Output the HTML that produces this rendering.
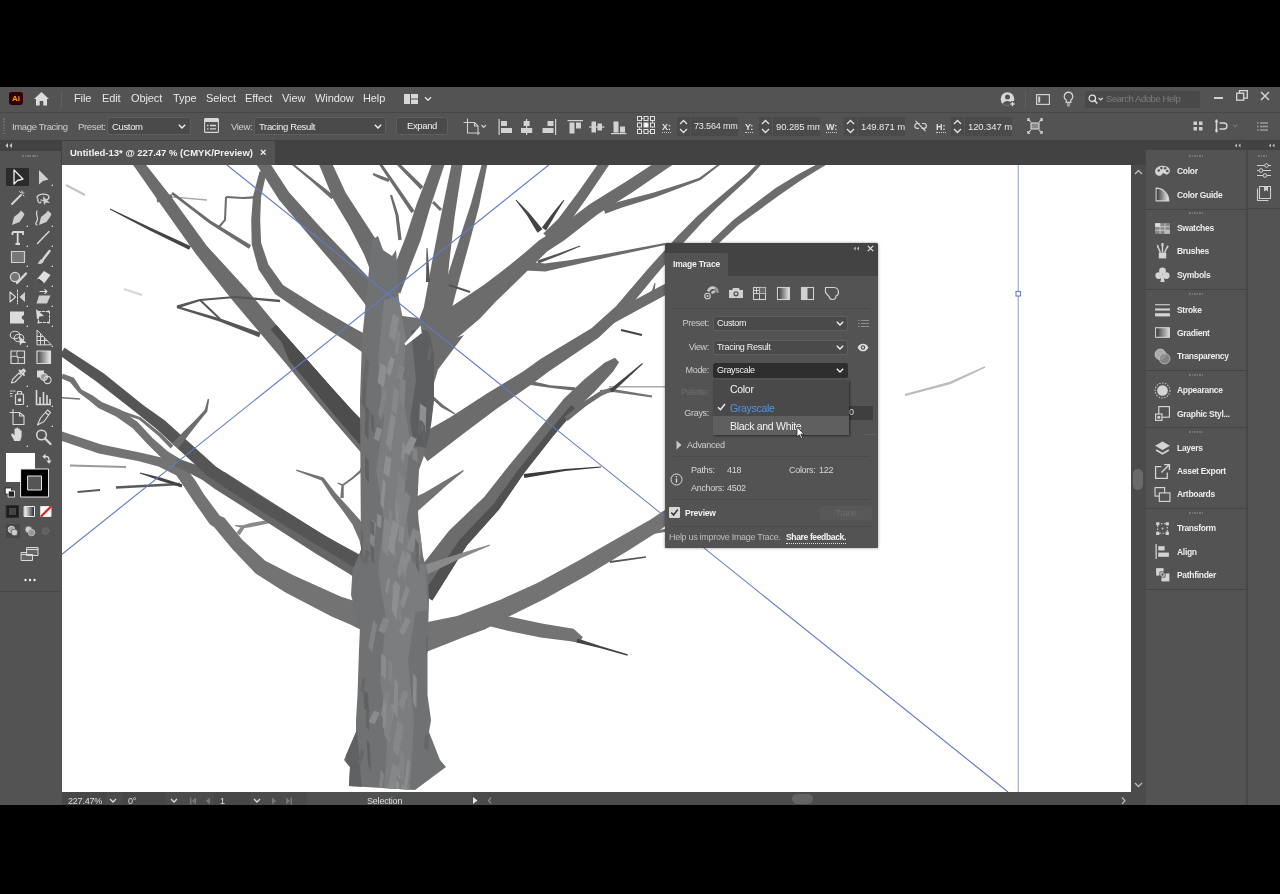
<!DOCTYPE html>
<html lang="en">
<head>
<meta charset="utf-8">
<title>Adobe Illustrator - Image Trace</title>
<style>
*{box-sizing:border-box;margin:0;padding:0}
html,body{width:1280px;height:894px;overflow:hidden;background:#000}
body{position:relative;font-family:"Liberation Sans",sans-serif;font-size:10.5px;color:#e2e2e2;letter-spacing:-0.2px}
.abs{position:absolute}
#app{will-change:transform;position:absolute;left:0;top:87px;width:1280px;height:718px;background:#535353;overflow:hidden}
/* coordinates inside #app are target-y minus 87 */
#menubar{position:absolute;left:0;top:0;width:1280px;height:25px;background:#535353}
#menubar .mi{position:absolute;top:5px;font-size:11px;color:#e6e6e6;letter-spacing:-0.1px;white-space:nowrap}
#ctrlbar{position:absolute;left:0;top:25px;width:1280px;height:29px;background:#535353;border-top:1px solid #474747;border-bottom:1px solid #404040}
#ctrlbar .t{position:absolute;top:8px;font-size:9.5px;color:#d0d0d0;white-space:nowrap;letter-spacing:-0.35px}
.dd{position:absolute;background:#4a4a4a;border:1px solid #5e5e5e;border-radius:2px;color:#f0f0f0;font-size:9.5px;white-space:nowrap;letter-spacing:-0.35px}
.dd span{position:absolute;left:4px;top:3px}
.chev{position:absolute;width:8px;height:5px}
#tabbar{position:absolute;left:0;top:54px;width:1280px;height:24px;background:#424242}
#tab{position:absolute;left:62px;top:0;width:213px;height:24px;background:#535353;font-weight:bold;font-size:9.5px;color:#f2f2f2;letter-spacing:0}
#tab span{position:absolute;top:6px;white-space:nowrap}
#tools{position:absolute;left:0;top:54px;width:61px;height:665px;background:#535353}
#canvas{position:absolute;left:62px;top:78px;width:1069px;height:627px;background:#fff;overflow:hidden}
#vscroll{position:absolute;left:1131px;top:78px;width:15px;height:627px;background:#4b4b4b}
#status{position:absolute;left:62px;top:705px;width:1084px;height:14px;background:#4b4b4b;font-size:9px;color:#ddd}
#status .t{position:absolute;top:3.500px;white-space:nowrap}
#rpanel{position:absolute;left:1146px;top:54px;width:134px;height:665px;background:#535353}
.pi{position:absolute;left:31px;margin-top:1px;font-size:8.500px;font-weight:bold;color:#ececec;white-space:nowrap;letter-spacing:-0.300px}
.grip{position:absolute;width:12px;height:2px;background:repeating-linear-gradient(90deg,#777 0 1.5px,transparent 1.5px 2.5px)}
.sep{position:absolute;height:1px;background:#454545}
</style>
</head>
<body>
<div id="app">
  <div id="menubar">
    <!-- Ai logo -->
    <div class="abs" style="left:9px;top:5px;width:14px;height:13px;background:#330000;border-radius:3px;color:#ff9a00;font-size:8px;font-weight:bold;text-align:center;line-height:13px;letter-spacing:0">Ai</div>
    <svg class="abs" style="left:33px;top:4px" width="17" height="16" viewBox="0 0 17 16"><path d="M8.5 1 L16 8 H14 V14.5 H10.3 V10 H6.7 V14.5 H3 V8 H1 Z" fill="#dcdcdc"/></svg>
    <div class="abs" style="left:61px;top:4px;width:1px;height:17px;background:#5f5f5f"></div>
    <div class="mi" style="left:74px">File</div>
    <div class="mi" style="left:102px">Edit</div>
    <div class="mi" style="left:131px">Object</div>
    <div class="mi" style="left:173px">Type</div>
    <div class="mi" style="left:206px">Select</div>
    <div class="mi" style="left:245px">Effect</div>
    <div class="mi" style="left:282px">View</div>
    <div class="mi" style="left:315px">Window</div>
    <div class="mi" style="left:363px">Help</div>

    <svg class="abs" style="left:404px;top:6px" width="30" height="12" viewBox="0 0 30 12"><rect x="0" y="1" width="6" height="10" fill="#d8d8d8"/><rect x="7" y="1" width="7" height="4.500" fill="#d8d8d8"/><rect x="7" y="6.500" width="7" height="4.500" fill="#d8d8d8"/><path d="M21 4.200L24 7.200 27 4.200" fill="none" stroke="#e0e0e0" stroke-width="1.400"/></svg>
    <svg class="abs" style="left:1000px;top:4px" width="16" height="17" viewBox="0 0 16 17"><circle cx="7.500" cy="8" r="6.800" fill="#d8d8d8"/><circle cx="7.500" cy="6" r="2.500" fill="#535353"/><path d="M3 12.500c1-3.500 8-3.500 9 0-2.500 3-6.500 3-9 0z" fill="#535353"/><path d="M12.500 10v6M9.500 13h6" stroke="#535353" stroke-width="3"/><path d="M12.500 10.800v4.400M10.300 13h4.400" stroke="#d8d8d8" stroke-width="1.300"/></svg>
    <div class="abs" style="left:1025px;top:4px;width:1px;height:17px;background:#5f5f5f"></div>
    <svg class="abs" style="left:1036px;top:7px" width="14" height="11" viewBox="0 0 14 11"><rect x="0.600" y="0.600" width="12.800" height="9.800" fill="none" stroke="#cfcfcf" stroke-width="1.200"/><rect x="2.200" y="2.500" width="2" height="6" fill="#cfcfcf"/></svg>
    <svg class="abs" style="left:1063px;top:4px" width="11" height="16" viewBox="0 0 11 16"><path d="M5.500 1.200a4.300 4.300 0 0 0-2.300 7.900v2.200h4.600V9.100A4.300 4.300 0 0 0 5.500 1.200z" fill="none" stroke="#d8d8d8" stroke-width="1.200"/><path d="M3.700 13h3.600M4.200 14.800h2.600" stroke="#d8d8d8" stroke-width="1.100"/></svg>
    <div class="abs" style="left:1085px;top:4px;width:115px;height:17px;background:#494949;border-radius:2px"></div>
    <svg class="abs" style="left:1088px;top:7px" width="16" height="11" viewBox="0 0 16 11"><circle cx="4.300" cy="4.300" r="3.200" fill="none" stroke="#e0e0e0" stroke-width="1.300"/><path d="M6.600 6.600L9.300 9.600" stroke="#e0e0e0" stroke-width="1.500"/><path d="M10.600 3.800L12.700 6 14.800 3.800" fill="none" stroke="#e0e0e0" stroke-width="1.200"/></svg>
    <div class="abs" style="left:1106px;top:6px;font-size:9.500px;color:#7d7d7d;letter-spacing:-0.450px;white-space:nowrap">Search Adobe Help</div>
    <div class="abs" style="left:1214px;top:10px;width:9px;height:2px;background:#d0d0d0"></div>
    <svg class="abs" style="left:1236px;top:3px" width="12" height="11" viewBox="0 0 12 11"><rect x="0.700" y="3.200" width="7" height="7" fill="none" stroke="#d8d8d8" stroke-width="1.300"/><path d="M3.500 3V0.700h7.800v7.500H8" fill="none" stroke="#d8d8d8" stroke-width="1.300"/></svg>
    <svg class="abs" style="left:1260px;top:4px" width="10" height="10" viewBox="0 0 10 10"><path d="M1 1L9 9M9 1L1 9" stroke="#d8d8d8" stroke-width="1.400"/></svg>
  </div>
  <div id="ctrlbar">
    <div class="abs" style="left:3px;top:5px;width:2px;height:16px;background:repeating-linear-gradient(180deg,#6a6a6a 0 1.500px,transparent 1.500px 3px)"></div>
    <div class="t" style="left:12px">Image Tracing</div>
    <div class="t" style="left:78px">Preset:</div>
    <div class="dd" style="left:107px;top:4px;width:84px;height:18px"><span>Custom</span><svg class="chev" style="left:70px;top:6px" viewBox="0 0 8 5"><path d="M0.800 0.800L4 4 7.200 0.800" fill="none" stroke="#f0f0f0" stroke-width="1.400"/></svg></div>
    <svg class="abs" style="left:204px;top:5px" width="15" height="15" viewBox="0 0 15 15"><rect x="0.600" y="0.600" width="13.800" height="13.800" rx="1" fill="none" stroke="#d8d8d8" stroke-width="1.100"/><rect x="0.600" y="0.600" width="13.800" height="3.400" fill="#d8d8d8"/><path d="M3 7.500h1.500M6 7.500h6M3 10.800h1.500M6 10.800h6" stroke="#d8d8d8" stroke-width="1.300"/></svg>
    <div class="t" style="left:231px">View:</div>
    <div class="dd" style="left:254px;top:4px;width:132px;height:18px"><span>Tracing Result</span><svg class="chev" style="left:119px;top:6px" viewBox="0 0 8 5"><path d="M0.800 0.800L4 4 7.200 0.800" fill="none" stroke="#f0f0f0" stroke-width="1.400"/></svg></div>
    <div class="dd" style="left:396px;top:4px;width:52px;height:18px;text-align:center;line-height:16px">Expand</div>

    <svg class="abs" style="left:463px;top:5px" width="24" height="18" viewBox="0 0 24 18" fill="none" stroke="#cfcfcf" stroke-width="1.100"><path d="M4.500 0.500v14.500h12.500M0.500 4.500h11l3.500 3.500v9"/><path d="M11.500 4.500v3.500h3.500"/><path d="M18.500 7l2.200 2.300L22.900 7" stroke-width="1.200"/></svg>
    <svg class="abs" style="left:498px;top:6px" width="130" height="16" viewBox="0 0 130 16" fill="#d2d2d2">
      <rect x="0.500" y="0" width="1.200" height="16"/><rect x="3" y="2" width="6" height="5"/><rect x="3" y="9" width="11" height="5"/>
      <rect x="28" y="0" width="1.200" height="16"/><rect x="25.600" y="2" width="6" height="5"/><rect x="23" y="9" width="11.200" height="5"/>
      <rect x="57" y="0" width="1.200" height="16"/><rect x="49.500" y="2" width="6" height="5"/><rect x="44.500" y="9" width="11" height="5"/>
      <rect x="69.500" y="1" width="15.500" height="1.200"/><rect x="71.500" y="3.500" width="5" height="11"/><rect x="78" y="3.500" width="5" height="6"/>
      <rect x="91" y="7.400" width="15.500" height="1.200"/><rect x="93.500" y="2.500" width="4.500" height="11"/><rect x="99.500" y="4.500" width="4.500" height="7"/>
      <rect x="113" y="14" width="15.500" height="1.200"/><rect x="115.500" y="2.500" width="5" height="11"/><rect x="122" y="7.500" width="5" height="6"/>
    </svg>
    <svg class="abs" style="left:637px;top:3px" width="18" height="18" viewBox="0 0 18 18" fill="none" stroke="#e0e0e0" stroke-width="1"><rect x="2.500" y="2.500" width="13" height="13" stroke-dasharray="1.300 1.300"/><g fill="#535353"><rect x="0.500" y="0.500" width="4" height="4"/><rect x="7" y="0.500" width="4" height="4"/><rect x="13.500" y="0.500" width="4" height="4"/><rect x="0.500" y="7" width="4" height="4"/><rect x="13.500" y="7" width="4" height="4"/><rect x="0.500" y="13.500" width="4" height="4"/><rect x="7" y="13.500" width="4" height="4"/><rect x="13.500" y="13.500" width="4" height="4"/></g><rect x="7" y="7" width="4" height="4" fill="#fff"/></svg>
<div class="t" style="left:662px;top:8.500px;font-weight:bold;color:#e0e0e0;border-bottom:1px dotted #ccc;line-height:10px;font-size:9px;letter-spacing:0">X:</div><div class="abs" style="left:677px;top:4px;width:13px;height:19px;background:#4a4a4a"></div><svg class="abs" style="left:679px;top:6px" width="9" height="15" viewBox="0 0 9 15"><path d="M1 5L4.500 1.500 8 5M1 10L4.500 13.500 8 10" fill="none" stroke="#e4e4e4" stroke-width="1.300"/></svg><div class="abs" style="left:691px;top:4px;width:47px;height:19px;background:#4a4a4a;overflow:hidden;font-size:9px;color:#e8e8e8;white-space:nowrap;letter-spacing:-0.150px"><span style="position:absolute;left:3px;top:3.500px">73.564 mm</span></div><div class="t" style="left:745px;top:8.500px;font-weight:bold;color:#e0e0e0;border-bottom:1px dotted #ccc;line-height:10px;font-size:9px;letter-spacing:0">Y:</div><div class="abs" style="left:759px;top:4px;width:13px;height:19px;background:#4a4a4a"></div><svg class="abs" style="left:761px;top:6px" width="9" height="15" viewBox="0 0 9 15"><path d="M1 5L4.500 1.500 8 5M1 10L4.500 13.500 8 10" fill="none" stroke="#e4e4e4" stroke-width="1.300"/></svg><div class="abs" style="left:773px;top:4px;width:47px;height:19px;background:#4a4a4a;overflow:hidden;font-size:9.500px;color:#e8e8e8;white-space:nowrap;letter-spacing:-0.100px"><span style="position:absolute;left:3px;top:3.500px">90.285 mm</span></div><div class="t" style="left:826px;top:8.500px;font-weight:bold;color:#e0e0e0;border-bottom:1px dotted #ccc;line-height:10px;font-size:9px;letter-spacing:0">W:</div><div class="abs" style="left:844px;top:4px;width:13px;height:19px;background:#4a4a4a"></div><svg class="abs" style="left:846px;top:6px" width="9" height="15" viewBox="0 0 9 15"><path d="M1 5L4.500 1.500 8 5M1 10L4.500 13.500 8 10" fill="none" stroke="#e4e4e4" stroke-width="1.300"/></svg><div class="abs" style="left:858px;top:4px;width:47px;height:19px;background:#4a4a4a;overflow:hidden;font-size:9.500px;color:#e8e8e8;white-space:nowrap;letter-spacing:-0.100px"><span style="position:absolute;left:3px;top:3.500px">149.871 mm</span></div><svg class="abs" style="left:914px;top:7px" width="13" height="12" viewBox="0 0 13 12" fill="none" stroke="#d8d8d8" stroke-width="1.200"><path d="M5.500 3.500H3.200a2.400 2.400 0 0 0 0 4.800H5M8 3.500h2a2.400 2.400 0 0 1 0 4.800H7.500"/><path d="M1.500 0.800L11.500 11" stroke-width="1.100"/></svg><div class="t" style="left:936px;top:8.500px;font-weight:bold;color:#e0e0e0;border-bottom:1px dotted #ccc;line-height:10px;font-size:9px;letter-spacing:0">H:</div><div class="abs" style="left:951px;top:4px;width:13px;height:19px;background:#4a4a4a"></div><svg class="abs" style="left:953px;top:6px" width="9" height="15" viewBox="0 0 9 15"><path d="M1 5L4.500 1.500 8 5M1 10L4.500 13.500 8 10" fill="none" stroke="#e4e4e4" stroke-width="1.300"/></svg><div class="abs" style="left:965px;top:4px;width:47px;height:19px;background:#4a4a4a;overflow:hidden;font-size:9.500px;color:#e8e8e8;white-space:nowrap;letter-spacing:-0.100px"><span style="position:absolute;left:3px;top:3.500px">120.347 mm</span></div>
    <svg class="abs" style="left:1027px;top:5px" width="16" height="16" viewBox="0 0 16 16" fill="none" stroke="#d8d8d8" stroke-width="1.100"><rect x="4" y="5" width="8" height="6" fill="#888"/><path d="M0.800 0.800l3 3M15.200 0.800l-3 3M0.800 15.200l3-3M15.200 15.200l-3-3M0.800 3V0.800H3M13 0.800h2.200V3M0.800 13v2.200H3M13 15.200h2.200V13"/></svg>
    <svg class="abs" style="left:1193px;top:8px" width="10" height="10" viewBox="0 0 10 10" fill="#cfcfcf"><rect x="0.500" y="0.500" width="3.500" height="3.500"/><rect x="6" y="0.500" width="3.500" height="3.500"/><rect x="0.500" y="6" width="3.500" height="3.500"/><rect x="6" y="6" width="3.500" height="3.500"/></svg>
    <svg class="abs" style="left:1215px;top:6px" width="26" height="14" viewBox="0 0 26 14" fill="none" stroke="#d8d8d8" stroke-width="1.300"><path d="M1.500 0.500v13" stroke-width="1.500"/><circle cx="1.500" cy="2.500" r="1.300" fill="#d8d8d8" stroke="none"/><circle cx="1.500" cy="11.500" r="1.300" fill="#d8d8d8" stroke="none"/><path d="M4.500 4h4.500a3 3 0 0 1 0 6H4.500"/><path d="M18 5.500l2.200 2.300 2.200-2.300" stroke="#777" stroke-width="1.100"/></svg>
    <svg class="abs" style="left:1257px;top:9px" width="11" height="9" viewBox="0 0 11 9"><path d="M3 1h8M3 4.500h8M3 8h8" stroke="#9a9a9a" stroke-width="1.400"/><path d="M0 1h1.600M0 4.500h1.600M0 8h1.600" stroke="#9a9a9a" stroke-width="1.400"/></svg>
  </div>
  <div id="tabbar">
    <div id="tab"><span style="left:8px">Untitled-13* @ 227.47 % (CMYK/Preview)</span><span style="left:198px;top:5px;font-size:11px">×</span></div>
  </div>
  <div id="tools">
    <div class="abs" style="left:0;top:0;width:61px;height:10px;background:#424242"></div>
    <svg class="abs" style="left:5px;top:2px" width="8" height="5" viewBox="0 0 8 5"><path d="M3 0 L0.5 2.5 L3 5Z M7 0 L4.5 2.5 L7 5Z" fill="#cfcfcf"/></svg>
    <div class="grip" style="left:22px;top:14px;width:16px"></div>
    <div class="abs" style="left:6px;top:27px;width:23px;height:18px;background:#2b2b2b;border-radius:1px"></div>
    <svg class="abs" style="left:0;top:0" width="61" height="560" viewBox="0 141 61 560" fill="none" stroke="#d9d9d9" stroke-width="1.4" stroke-linejoin="round" stroke-linecap="round">
      <!-- row1: selection / direct selection -->
      <path d="M14 170 L14 184 L17.5 180.5 L23 179 Z" stroke="#f0f0f0" stroke-width="1.3"/>
      <path d="M39 170 L39 184.5 L43 181 L48.5 179.5 Z" fill="#cfcfcf" stroke="none"/>
      <path d="M53 184 l-2 2 h2z" fill="#cfcfcf" stroke="none"/>
      <!-- row2: magic wand / lasso -->
      <path d="M12 204 L21 195" stroke-width="1.8"/><path d="M22 191v2M24 193h-2M19.5 191.5l1 1M24 196l-1-1" stroke-width="1"/>
      <path d="M37 198 c0-5 12-5 12-1 c0 3-5 4-8 3 M38 199 c-1 3 2 5 3 3" stroke-width="1.3"/><path d="M43 196 L44 205 L46 202.5 L50 203 Z" fill="#cfcfcf" stroke="none"/>
      <!-- row3: pen / curvature -->
      <path d="M12 225 L14 217 L19 213 L23 217 L19.5 222 Z M19 213 L21 210.5 L24.5 214 L23 217" fill="#cfcfcf" stroke="none"/><path d="M28 225 l-2 2 h2z" fill="#cfcfcf" stroke="none"/>
      <path d="M39 225 L41 217 L46 213 L50 217 L46.5 222 Z M46 213 L48 210.5 L51.5 214 L50 217" fill="#cfcfcf" stroke="none"/><path d="M37 211 c-2 4 2 6 0 10 c-1 2 -2 3 0 4" stroke-width="1.2"/><path d="M53 225 l-2 2 h2z" fill="#cfcfcf" stroke="none"/>
      <!-- row4: type / line -->
      <path d="M12.5 232 H23 V235 M12.5 232 V235 M17.7 232 V244 M15.5 244 H20" stroke-width="1.8" stroke-linecap="butt" stroke-linejoin="miter"/><path d="M28 245 l-2 2 h2z" fill="#cfcfcf" stroke="none"/>
      <path d="M37.5 243.5 L49 231.5" stroke-width="1.4"/><path d="M53 245 l-2 2 h2z" fill="#cfcfcf" stroke="none"/>
      <!-- row5: rectangle / paintbrush -->
      <rect x="11.5" y="251.5" width="13" height="11" fill="#777" stroke="#cfcfcf" stroke-width="1.2"/><path d="M28 265 l-2 2 h2z" fill="#cfcfcf" stroke="none"/>
      <path d="M49.5 251 L43 259.5" stroke-width="2.4"/><path d="M42.5 259 c-3 0 -3 3 -5 4.500 c3 1 6 0 6.500 -3z" fill="#cfcfcf" stroke="none"/><path d="M53 265 l-2 2 h2z" fill="#cfcfcf" stroke="none"/>
      <!-- row6: shaper / eraser -->
      <circle cx="15" cy="277" r="4.600" fill="#777" stroke-width="1.2"/><path d="M17 283 L26 273.500" stroke-width="2.4"/><path d="M28 285 l-2 2 h2z" fill="#cfcfcf" stroke="none"/>
      <path d="M37 279 L44 271 L50.500 275 L44 283.500 Z" fill="#e0e0e0" stroke="none"/><path d="M38.500 279.500 L42.700 282.600" stroke="#444" stroke-width="1.6"/><path d="M53 285 l-2 2 h2z" fill="#cfcfcf" stroke="none"/>
      <!-- row7: reflect / scale(shear) -->
      <path d="M10 292 L15.500 297 L10 302 Z" stroke-width="1.1"/><path d="M25 292 L19.500 297 L25 302 Z" fill="#cfcfcf" stroke="none"/><path d="M17.500 290 V304" stroke-width="1" stroke-dasharray="2 1.300"/><path d="M28 305 l-2 2 h2z" fill="#cfcfcf" stroke="none"/>
      <path d="M36.500 303.500 L39 295.500 H50.500 L47 303.500 Z" fill="#cfcfcf" stroke="none"/><path d="M40 291.500 h7 m-2.200 -2 l2.200 2 l-2.200 2" stroke-width="1.100"/><path d="M53 305 l-2 2 h2z" fill="#cfcfcf" stroke="none"/>
      <!-- row8: width / free transform -->
      <path d="M10 311.500 H24 V315 C21 316 21 319 24 320 V323.500 H10 Z" fill="#dcdcdc" stroke="none"/><path d="M28 325 l-2 2 h2z" fill="#cfcfcf" stroke="none"/>
      <rect x="38.500" y="311.500" width="11" height="11" stroke-width="1" stroke-dasharray="2.200 1.500"/><path d="M36 309 L37 319.500 L39.500 316.500 L44 316 Z" fill="#dcdcdc" stroke="none"/><path d="M47.500 310.500h2v2h-2zM47.500 321.500h2v2h-2zM37.500 321.500h2v2h-2z" fill="#dcdcdc" stroke="none"/><path d="M53 325 l-2 2 h2z" fill="#cfcfcf" stroke="none"/>
      <!-- row9: shape builder / perspective grid -->
      <ellipse cx="15" cy="335" rx="4.800" ry="3.800" stroke-width="1.100"/><ellipse cx="19" cy="338" rx="4.800" ry="3.800" stroke-width="1.100"/><path d="M19 336 L20 345.500 L22 343 L26.500 343 Z" fill="#dcdcdc" stroke="none"/><path d="M28 345 l-2 2 h2z" fill="#cfcfcf" stroke="none"/>
      <path d="M37 344.500 V330 L51 344.500 Z M40.500 344.500 V334 M44.500 344.500 V338 M37 340.500 H47 M37 336.500 H43" stroke-width="1"/><path d="M53 345 l-2 2 h2z" fill="#cfcfcf" stroke="none"/>
      <!-- row10: mesh / gradient -->
      <rect x="11" y="351" width="13.500" height="12.500" stroke-width="1.200"/><path d="M11 357 c4 -3 9 3 13.500 0 M17.500 351 c-3 4 3 8 0 12.500" stroke-width="1"/>
      <defs><linearGradient id="tg" x1="0" x2="1"><stop offset="0" stop-color="#444"/><stop offset="1" stop-color="#eee"/></linearGradient>
      <linearGradient id="tg2" x1="0" x2="1"><stop offset="0" stop-color="#fff"/><stop offset="1" stop-color="#222"/></linearGradient></defs>
      <rect x="37" y="351" width="13.500" height="12.500" fill="url(#tg)" stroke-width="1.200"/>
      <!-- row11: eyedropper / blend -->
      <path d="M11.500 383 L12.500 379.500 L19 373 L21.500 375.500 L15 382 Z" stroke-width="1.100"/><path d="M19.500 370.500 L24 375 M20.500 372.500 L23.500 369.500 L25 371 L22.500 374" stroke-width="1.800"/><path d="M28 385 l-2 2 h2z" fill="#cfcfcf" stroke="none"/>
      <rect x="37" y="370.500" width="7" height="7" fill="#dcdcdc" stroke="none"/><circle cx="44" cy="377" r="3.600" fill="#999" stroke-width="1"/><circle cx="47.500" cy="380" r="3.600" stroke-width="1.100"/>
      <!-- row12: symbol sprayer / column graph -->
      <rect x="15.500" y="394" width="8" height="10.500" rx="1" stroke-width="1.200"/><circle cx="19.500" cy="400" r="1.800" fill="#dcdcdc" stroke="none"/><path d="M17.500 394 v-2.500 h4 v2.500" stroke-width="1.100"/><path d="M10.500 391h1.500M13.500 391h1.500M10.500 393.500h1.500M10.500 396h1.500" stroke-width="1.200"/><path d="M28 405 l-2 2 h2z" fill="#cfcfcf" stroke="none"/>
      <path d="M36.500 390 V404.500 H51 M40 404 V397 M43.500 404 V392 M47 404 V395 M50 404 V399" stroke-width="1.600" stroke-linecap="butt"/><path d="M53 405 l-2 2 h2z" fill="#cfcfcf" stroke="none"/>
      <!-- row13: artboard / slice -->
      <path d="M13 409.500 V424.500 H24 V416 L19.500 412.500 H10 M19.500 412.500 V416 H24" stroke-width="1.100"/>
      <path d="M37.500 425 L40.500 418 L47.500 410 L50.500 412.500 L44 421.500 Z M45.500 412.500 l3 2.500" stroke-width="1.100"/><path d="M53 425 l-2 2 h2z" fill="#cfcfcf" stroke="none"/>
      <!-- row14: hand / zoom -->
      <path d="M13.500 439 c-2 -3 -3 -5 -1.500 -5.500 c1 -0.300 2 1.500 2.500 2 v-6 c0 -1.300 1.800 -1.300 1.800 0 v-1 c0 -1.300 1.800 -1.300 1.800 0 v1 c0 -1.300 1.800 -1.300 1.800 0 v1.500 c0 -1.200 1.700 -1.200 1.700 0 v5 c0 2 -1 3 -1.500 5 h-6 z" fill="#dcdcdc" stroke="none"/><path d="M28 445 l-2 2 h2z" fill="#cfcfcf" stroke="none"/>
      <circle cx="41.500" cy="435" r="4.800" stroke-width="1.500"/><path d="M45 438.500 L50.500 444" stroke-width="2.200"/>
      <!-- fill / stroke -->
      <rect x="6" y="453" width="29" height="29" fill="#fff" stroke="none"/>
      <path d="M44.500 456.500 h1.500 a3 3 0 0 1 3 3 v1.500" stroke-width="1.300"/><path d="M45.500 453.800 L42.300 456.500 L45.500 459.200Z M46.300 460.500 L49 463.700 L51.700 460.500Z" fill="#dcdcdc" stroke="none"/>
      <rect x="21" y="469" width="27.500" height="28" fill="#000" stroke="#e8e8e8" stroke-width="1"/>
      <rect x="28" y="476" width="13.500" height="14" fill="#555" stroke="#e8e8e8" stroke-width="1"/>
      <rect x="5.500" y="488" width="6" height="6" fill="#fff" stroke="#222" stroke-width="0.800"/><rect x="8.500" y="491" width="6" height="6" fill="#222" stroke="#fff" stroke-width="0.800"/>
      <!-- color / gradient / none -->
      <rect x="6.500" y="505.500" width="12" height="12" fill="#1c1c1c" stroke="#2d2d2d" stroke-width="1"/><rect x="9" y="508" width="7" height="7" fill="#444" stroke="none"/>
      <rect x="24.500" y="506.500" width="10" height="10" fill="url(#tg2)" stroke="#e8e8e8" stroke-width="1"/>
      <rect x="41" y="506.500" width="10" height="10" fill="#fff" stroke="#e8e8e8" stroke-width="1"/><path d="M41.500 516 L50.500 507" stroke="#e02020" stroke-width="2.200"/>
      <!-- draw modes -->
      <rect x="6" y="524" width="14" height="14" fill="#474747" stroke="none"/>
      <circle cx="11.500" cy="529.500" r="3.300" fill="#aaa" stroke-width="0.900"/><circle cx="14.500" cy="532.500" r="3.300" fill="#cfcfcf" stroke="#555" stroke-width="0.800"/>
      <circle cx="28.500" cy="529.500" r="3.300" fill="#cfcfcf" stroke="#777" stroke-width="0.800"/><circle cx="31.500" cy="532.500" r="3.300" fill="#999" stroke="#bbb" stroke-width="0.900"/>
      <circle cx="45.500" cy="531" r="3.400" fill="#606060" stroke="#6a6a6a" stroke-width="0.900"/>
      <!-- screen mode -->
      <rect x="21.500" y="552.500" width="11" height="8" fill="#666" stroke-width="1"/><rect x="27" y="547.500" width="11" height="8" fill="#666" stroke-width="1"/><path d="M21.500 554.500h11M27 549.500h11" stroke-width="1"/>
      <!-- dots -->
      <circle cx="25.500" cy="580" r="1.200" fill="#eee" stroke="none"/><circle cx="30" cy="580" r="1.200" fill="#eee" stroke="none"/><circle cx="34.500" cy="580" r="1.200" fill="#eee" stroke="none"/>
    </svg>
    <div class="sep" style="left:0;top:450px;width:61px;background:#484848"></div>
  </div>
  <div id="canvas">
    <svg id="art" width="1069" height="627" viewBox="62 165 1069 627" style="position:absolute;left:0;top:0">
<path d="M66.0 185.0 L85.0 195.0" stroke="#c4c4c4" stroke-width="2.0" fill="none"/>
<path d="M124.0 289.0 L142.0 295.0" stroke="#d6d6d6" stroke-width="2.0" fill="none"/>
<path d="M70.0 465.5 L126.0 467.0" stroke="#9a9a9a" stroke-width="2.0" fill="none"/>
<path d="M77.5 492.0 L100.0 490.0" stroke="#5a5a5a" stroke-width="2.0" fill="none"/>
<path d="M116.0 487.5 L180.0 484.0" stroke="#5a5a5a" stroke-width="2.5" fill="none"/>
<path d="M139.9 473.5 L159.6 480.4 L181.5 487.4 L182.5 484.6 L160.4 477.6 L140.1 472.5Z" fill="#444444"/>
<path d="M905.3 396.0 L950.4 384.2 L985.3 367.7 L984.7 366.3 L949.6 381.8 L904.7 394.0Z" fill="#bdbdbd"/>
<path d="M61.1 378.3 L70.1 382.3 L78.6 392.5 L89.3 400.5 L98.3 408.1 L116.0 416.5 L132.4 428.0 L147.2 443.8 L162.1 458.5 L174.9 468.5 L181.1 459.5 L167.9 451.5 L152.8 438.2 L137.6 422.0 L120.0 409.5 L101.7 401.9 L92.7 395.5 L81.4 389.5 L73.9 377.7 L62.9 373.7Z" fill="#737373"/>
<path d="M117.5 412.4 L139.3 419.8 L158.8 436.3 L170.6 448.4 L173.4 445.6 L161.2 433.7 L140.7 417.2 L118.5 409.6Z" fill="#737373"/>
<path d="M62.0 397.7 L80.0 399.0" stroke="#737373" stroke-width="1.6" fill="none"/>
<path d="M58.6 439.8 L98.8 453.6 L139.1 461.2 L158.5 466.5 L176.2 475.2 L184.6 487.6 L194.0 501.8 L209.8 524.2 L214.0 527.1 L232.5 549.3 L255.6 573.5 L285.1 592.3 L332.1 616.7 L350.3 624.6 L367.1 633.1 L376.9 606.9 L358.7 602.2 L341.1 596.7 L293.9 575.5 L265.2 560.7 L242.5 540.1 L224.4 517.7 L219.8 515.8 L204.2 494.8 L195.4 480.4 L183.8 464.8 L161.5 457.5 L140.9 452.8 L101.2 444.4 L61.4 431.2Z" fill="#737373"/>
<path d="M234.9 526.0 L243.0 528.3 L250.4 527.2 L268.3 523.5 L287.2 520.2 L286.8 517.8 L267.7 520.1 L249.6 523.2 L243.0 525.3 L235.1 525.0Z" fill="#8a8a8a"/>
<path d="M241.6 526.0 L236.4 532.8 L239.6 535.2 L244.4 528.0Z" fill="#8a8a8a"/>
<path d="M174.4 465.7 L188.1 472.6 L202.5 480.0 L215.0 489.1 L264.8 520.7 L314.8 552.9 L349.0 573.7 L363.8 583.9 L376.2 562.1 L360.0 554.7 L325.2 535.9 L275.2 504.3 L225.0 472.3 L207.5 468.0 L191.9 463.4 L177.6 458.3Z" fill="#666666"/>
<path d="M59.5 355.1 L97.0 382.0 L137.3 413.6 L157.1 429.6 L179.8 450.6 L208.2 476.5 L253.4 506.3 L313.5 543.0 L352.7 566.6 L366.5 575.1 L373.5 562.9 L359.3 555.4 L319.9 532.4 L260.0 495.7 L215.8 466.5 L188.2 441.4 L164.9 420.4 L143.7 405.4 L103.6 373.2 L64.5 347.7Z" fill="#555555"/>
<path d="M178.2 448.6 L188.2 435.6 L198.1 422.8 L207.3 411.4 L209.2 399.2 L207.8 398.8 L204.7 410.0 L195.1 420.2 L183.6 431.6 L172.2 443.4Z" fill="#6c6c6c"/>
<path d="M296.0 470.8 L321.5 480.5 L331.7 496.2 L342.4 510.3 L352.5 524.4 L359.5 540.4 L362.3 553.9 L375.7 550.1 L370.5 535.6 L359.5 519.6 L347.4 506.1 L335.7 493.2 L323.5 477.5 L296.4 469.4Z" fill="#737373"/>
<path d="M343.7 498.1 L343.8 484.6 L337.7 482.5 L337.3 483.5 L341.4 485.4 L340.3 497.9Z" fill="#737373"/>
<path d="M343.6 485.8 L353.3 478.8 L361.4 472.1 L365.7 466.0 L362.3 464.0 L359.6 470.5 L352.1 477.2 L342.4 484.2Z" fill="#737373"/>
<path d="M124.1 153.1 L135.3 168.1 L161.7 205.8 L196.1 254.2 L232.6 300.5 L262.8 336.2 L285.8 363.4 L315.6 399.7 L337.2 425.0 L361.4 453.0 L378.6 437.0 L352.8 411.0 L330.8 386.7 L299.8 351.4 L276.2 324.8 L246.4 288.9 L206.7 245.8 L172.3 198.2 L143.7 161.9 L132.6 146.9Z" fill="#6c6c6c"/>
<path d="M276.1 324.8 L299.8 351.4 L330.8 386.7 L352.8 411.0 L378.6 437.0 L371.4 443.7 L346.2 416.9 L324.4 392.2 L293.9 356.4 L270.6 329.6Z" fill="#4d4d4d"/>
<path d="M281.6 342.3 L289.2 360.6 L319.1 396.7 L340.4 422.2 L364.6 450.0 L378.4 437.0 L352.6 411.2 L330.9 386.7 L299.8 351.4 L282.4 341.7Z" fill="#4d4d4d"/>
<path d="M109.8 209.4 L149.3 230.3 L189.1 249.8 L190.9 246.2 L150.7 227.7 L110.2 208.6Z" fill="#444444"/>
<path d="M157.5 202.4 L172.6 197.9 L171.4 194.1 L156.5 199.6Z" fill="#6c6c6c"/>
<path d="M172.0 197.0 L207.0 200.0" stroke="#aaa" stroke-width="1.5" fill="none"/>
<path d="M171.2 194.0 L209.1 223.2 L248.9 248.7 L251.1 245.3 L210.9 220.8 L172.8 192.0Z" fill="#6c6c6c"/>
<path d="M225.9 198.0 L243.0 199.0 L260.1 198.2 L259.9 195.8 L243.0 197.0 L226.1 196.0Z" fill="#6c6c6c"/>
<path d="M225.0 197.0 L224.0 219.8 L218.2 226.3 L219.8 227.7 L226.0 220.2 L227.0 197.0Z" fill="#6c6c6c"/>
<path d="M177.4 308.4 L200.2 301.0 L235.0 298.0 L279.9 302.2 L280.1 299.8 L235.0 296.0 L199.8 299.0 L176.6 305.6Z" fill="#565656"/>
<path d="M176.7 308.0 L219.5 321.4 L259.1 337.3 L260.9 332.7 L220.5 318.6 L177.3 306.0Z" fill="#565656"/>
<path d="M200.0 300.0 L220.0 319.0" stroke="#565656" stroke-width="2.0" fill="none"/>
<path d="M259.6 171.2 L253.0 196.4 L251.2 219.9 L251.7 244.3 L258.6 269.4 L275.0 294.0 L314.4 320.7 L346.1 340.9 L367.3 355.7 L376.7 340.3 L353.9 328.1 L321.6 309.3 L283.0 285.0 L268.4 264.6 L261.1 242.7 L260.2 220.1 L261.0 197.6 L266.4 172.8Z" fill="#6c6c6c"/>
<path d="M249.3 153.3 L259.0 168.3 L279.0 199.8 L309.8 236.2 L341.2 272.9 L364.0 302.8 L372.8 315.7 L391.2 300.3 L380.0 289.2 L353.6 261.9 L320.2 227.0 L289.0 192.2 L269.0 161.7 L259.4 146.7Z" fill="#6c6c6c"/>
<path d="M313.7 152.5 L320.3 167.5 L333.3 199.2 L349.6 226.4 L364.1 254.4 L374.4 280.5 L395.6 269.5 L379.9 245.6 L362.4 218.6 L345.7 192.8 L331.7 162.5 L325.2 147.5Z" fill="#6c6c6c"/>
<path d="M274.4 150.8 L292.9 165.8 L311.2 181.0 L331.6 199.2 L334.4 195.8 L312.8 179.0 L294.1 164.2 L275.6 149.2Z" fill="#6c6c6c"/>
<path d="M369.6 150.8 L379.8 165.8 L396.6 191.0 L411.3 213.1 L414.7 210.9 L399.4 189.0 L382.2 164.2 L372.0 149.2Z" fill="#6c6c6c"/>
<path d="M372.6 174.9 L380.4 178.9 L388.4 182.1 L389.6 178.9 L381.6 176.1 L373.4 173.1Z" fill="#6c6c6c"/>
<path d="M382.9 151.1 L397.9 166.1 L420.6 189.4 L423.4 186.6 L400.1 163.9 L385.1 148.9Z" fill="#6c6c6c"/>
<path d="M390.0 195.3 L395.5 215.3 L398.3 240.2 L401.7 239.8 L398.5 214.7 L392.0 194.7Z" fill="#6c6c6c"/>
<path d="M400.3 293.5 L410.9 264.9 L420.5 240.4 L429.6 209.2 L443.7 167.0 L449.0 152.0 L437.7 148.0 L432.3 163.0 L416.4 204.8 L406.3 235.6 L397.1 259.1 L383.7 286.5Z" fill="#6c6c6c"/>
<path d="M435.4 354.0 L444.3 312.2 L449.4 261.2 L454.7 216.1 L462.4 166.0 L465.1 151.0 L454.3 149.0 L451.6 164.0 L441.3 213.9 L432.6 258.8 L423.7 307.8 L408.6 346.0Z" fill="#6c6c6c"/>
<path d="M446.1 330.6 L453.5 302.0 L460.4 275.4 L470.3 239.4 L479.1 206.1 L487.1 165.6 L490.6 150.6 L485.2 149.4 L481.7 164.4 L470.9 203.9 L460.3 236.4 L448.8 272.0 L440.5 298.0 L429.9 325.4Z" fill="#6c6c6c"/>
<path d="M433.0 202.0 L441.0 210.0" stroke="#6c6c6c" stroke-width="3.0" fill="none"/>
<path d="M426.5 248.0 L426.0 282.1 L430.0 281.9 L427.5 248.0Z" fill="#565656"/>
<path d="M425.4 365.5 L458.8 336.5 L479.7 318.8 L496.6 300.8 L513.2 284.8 L534.9 263.4 L547.1 251.4 L564.0 240.5 L597.4 214.5 L632.8 192.0 L665.2 169.8 L687.6 154.8 L681.2 145.2 L658.8 160.2 L626.2 181.6 L590.0 203.9 L556.0 229.5 L538.9 240.6 L525.1 252.6 L501.6 271.6 L483.4 285.2 L463.5 298.4 L441.2 313.5 L404.6 338.5Z" fill="#6c6c6c"/>
<path d="M552.7 242.4 L566.7 226.1 L586.2 198.8 L607.2 167.7 L617.5 152.7 L609.6 147.3 L599.2 162.3 L577.8 192.8 L558.1 219.1 L543.3 233.6Z" fill="#6c6c6c"/>
<path d="M515.6 200.3 L526.8 214.9 L537.5 232.7 L542.5 229.3 L529.2 213.1 L516.4 199.7Z" fill="#444444"/>
<path d="M563.6 199.7 L552.8 213.1 L541.9 227.6 L546.1 230.4 L555.2 214.9 L564.4 200.3Z" fill="#444444"/>
<path d="M605.2 213.8 L621.4 207.8 L655.3 197.3 L683.6 186.6 L700.6 179.9 L717.6 166.8 L738.9 150.8 L737.6 149.2 L716.4 165.2 L699.4 177.7 L682.4 183.4 L653.7 192.5 L619.6 201.6 L602.8 206.2Z" fill="#6c6c6c"/>
<path d="M538.5 263.4 L560.4 254.9 L580.2 246.5 L579.8 245.5 L559.6 253.1 L537.5 260.6Z" fill="#565656"/>
<path d="M525.6 270.5 L545.3 271.5 L570.5 265.7 L610.3 256.7 L665.2 245.0 L664.8 243.0 L609.7 253.3 L569.5 260.3 L544.7 263.5 L526.4 261.5Z" fill="#6c6c6c"/>
<path d="M449.0 285.0 L470.0 292.0" stroke="#565656" stroke-width="2.0" fill="none"/>
<path d="M427.5 461.2 L461.7 434.9 L496.6 408.7 L531.7 384.3 L549.1 371.2 L598.5 337.8 L624.0 313.8 L654.8 276.3 L683.3 243.0 L702.8 221.8 L715.2 209.3 L749.8 177.2 L758.8 167.2 L774.1 151.2 L771.6 148.8 L756.2 164.8 L746.8 174.0 L710.8 204.5 L697.2 216.2 L676.7 237.0 L647.2 269.7 L616.0 306.2 L591.5 328.2 L540.9 358.8 L523.1 371.5 L486.6 393.7 L449.9 417.5 L412.5 438.8Z" fill="#6c6c6c"/>
<path d="M612.2 323.9 L642.5 307.6 L669.4 292.9 L664.6 284.1 L637.5 298.4 L607.8 316.1Z" fill="#6c6c6c"/>
<path d="M654.5 292.3 L655.5 283.1 L654.5 282.9 L651.5 291.7Z" fill="#6c6c6c"/>
<path d="M621.0 330.0 L642.0 335.0" stroke="#444444" stroke-width="2.0" fill="none"/>
<path d="M715.4 246.5 L738.0 225.2 L780.3 194.6 L801.7 179.8 L821.2 167.7 L848.2 152.2 L845.7 147.8 L818.8 163.3 L798.3 174.2 L775.7 188.0 L733.6 219.8 L710.6 241.5Z" fill="#6c6c6c"/>
<path d="M432.3 600.6 L467.0 545.2 L499.0 509.5 L524.5 472.4 L552.8 436.4 L575.9 409.4 L595.5 390.8 L613.1 371.4 L619.0 362.3 L615.0 357.7 L604.9 362.6 L584.5 379.2 L564.1 398.6 L541.2 426.8 L511.5 462.4 L484.2 496.9 L449.0 530.8 L407.7 583.4Z" fill="#6c6c6c"/>
<path d="M432.3 600.6 L467.0 545.2 L499.0 509.5 L524.5 472.4 L552.8 436.4 L576.1 409.1 L571.2 405.0 L548.2 432.6 L519.3 468.4 L493.1 504.5 L459.8 539.4 L422.5 593.7Z" fill="#515151"/>
<path d="M524.3 478.0 L565.1 471.0 L601.0 467.5 L601.0 466.5 L564.9 469.0 L523.7 474.0Z" fill="#3a3a3a"/>
<path d="M530.6 385.0 L549.8 387.7 L574.8 390.7 L575.2 387.3 L550.2 385.3 L531.4 381.0Z" fill="#6c6c6c"/>
<path d="M567.6 420.9 L586.1 406.0 L601.1 396.0 L612.8 390.8 L611.2 387.2 L598.9 392.0 L583.1 402.0 L564.4 417.1Z" fill="#6c6c6c"/>
<path d="M600.2 394.0 L612.9 392.0 L651.8 397.5 L652.2 395.5 L613.1 389.0 L599.8 390.0Z" fill="#737373"/>
<path d="M609.0 386.7 L665.0 386.7" stroke="#aaa" stroke-width="1.5" fill="none"/>
<path d="M612.3 392.5 L626.8 378.9 L642.8 363.9 L642.2 363.1 L625.2 377.1 L609.7 389.5Z" fill="#444444"/>
<path d="M414.2 514.2 L430.6 499.7 L446.5 485.5 L463.8 470.9 L463.2 470.1 L443.5 481.5 L425.4 492.3 L405.8 501.8Z" fill="#737373"/>
<path d="M422.0 577.1 L460.9 558.3 L490.2 545.5 L489.8 544.5 L459.1 553.7 L418.0 566.9Z" fill="#8a8a8a"/>
<path d="M429.0 396.1 L441.1 407.2 L454.7 414.4 L455.3 413.6 L442.9 404.8 L431.0 393.9Z" fill="#6c6c6c"/>
<path d="M426.2 651.9 L464.0 636.9 L485.2 629.2 L509.0 616.6 L545.9 598.3 L586.7 575.5 L627.1 551.3 L657.4 531.9 L675.8 518.3 L668.2 507.7 L649.8 520.1 L618.9 537.5 L578.3 560.7 L537.9 582.7 L501.0 599.4 L476.8 608.8 L457.2 615.9 L417.8 624.1Z" fill="#737373"/>
<path d="M488.8 625.9 L508.6 630.9 L540.7 637.6 L570.5 641.3 L579.3 643.1 L582.7 636.9 L573.5 628.7 L543.1 623.8 L511.4 617.1 L491.2 614.1Z" fill="#737373"/>
<path d="M576.5 642.4 L599.7 648.1 L627.4 655.7 L627.8 654.3 L600.3 645.9 L577.5 638.6Z" fill="#444444"/>
<path d="M610.1 563.0 L646.1 557.7 L645.9 556.3 L609.9 561.0Z" fill="#565656"/>
<path d="M650.2 534.5 L668.2 531.5 L667.8 528.5 L649.8 531.5Z" fill="#737373"/>
<path d="M464 335 L438 369.5 L431.5 391 L431 412 L424 412 L424 350 Z" fill="#6c6c6c"/>
<clipPath id="tc"><path d="M378 236 L383 250 L392 256 L396 250 L398 275 L398.7 298 L402.3 316 L418 318 L430 335 L434 355 L434 400 L431 425 L426 450 L419 470 L417.5 500 L418.5 520 L421 540 L423 556 L428 575 L429 600 L427.5 650 L427.5 695 L431 720 L429 732 L440 760 L446 767 L415 790 L349 786 L350 767 L344 760 L356 732 L356 720 L357.5 695 L359 650 L360 627 L351 595 L352.5 570 L361 550 L360 400 L362 340 L369 270 L372 240Z"/></clipPath>
<path d="M378 236 L383 250 L392 256 L396 250 L398 275 L398.7 298 L402.3 316 L418 318 L430 335 L434 355 L434 400 L431 425 L426 450 L419 470 L417.5 500 L418.5 520 L421 540 L423 556 L428 575 L429 600 L427.5 650 L427.5 695 L431 720 L429 732 L440 760 L446 767 L415 790 L349 786 L350 767 L344 760 L356 732 L356 720 L357.5 695 L359 650 L360 627 L351 595 L352.5 570 L361 550 L360 400 L362 340 L369 270 L372 240Z" fill="#707172"/>
<g clip-path="url(#tc)">
<path d="M411 330 L434 330 L434 400 L428 448 L414 446 L410 420 L416 380Z" fill="#5d5e5f"/>
<path d="M384 300 L398 296 L406 340 L402 390 L410 440 L404 500 L412 560 L416 610 L408 660 L414 720 L410 790 L384 790 L388 730 L380 680 L386 620 L378 570 L384 520 L376 470 L384 420 L378 360Z" fill="#7c7d7e"/>
<path d="M344 740 L357 730 L362 790 L349 788Z" fill="#606162"/>
<path d="M395 560 L425 565 L428 610 L400 615Z" fill="#7b7c7d"/>
<path d="M371.8 519.4 L376.1 523.6 L373.9 547.6 L369.6 542.0Z" fill="#868788"/>
<path d="M385.8 689.9 L390.2 694.6 L384.8 721.1 L380.4 714.8Z" fill="#828384"/>
<path d="M411.9 447.1 L417.1 449.4 L417.9 462.3 L412.7 459.3Z" fill="#828384"/>
<path d="M405.8 617.2 L410.8 619.9 L403.9 635.6 L398.9 631.9Z" fill="#8a8b8c"/>
<path d="M398.0 328.9 L400.6 332.9 L397.6 355.9 L395.0 350.5Z" fill="#868788"/>
<path d="M402.6 551.8 L407.7 556.0 L406.0 579.8 L400.9 574.2Z" fill="#828384"/>
<path d="M383.4 617.6 L389.6 620.0 L384.4 633.9 L378.2 630.6Z" fill="#868788"/>
<path d="M402.7 548.7 L405.3 553.2 L399.7 578.5 L397.0 572.6Z" fill="#8a8b8c"/>
<path d="M374.0 710.6 L379.9 712.7 L374.4 724.6 L368.5 721.8Z" fill="#8a8b8c"/>
<path d="M413.1 527.9 L419.5 531.7 L412.8 553.1 L406.4 548.0Z" fill="#868788"/>
<path d="M394.4 677.6 L398.2 683.7 L397.5 718.6 L393.7 710.4Z" fill="#8a8b8c"/>
<path d="M399.7 365.3 L405.0 367.4 L401.6 379.6 L396.3 376.7Z" fill="#828384"/>
<path d="M383.8 386.2 L387.1 391.3 L381.5 420.7 L378.2 413.8Z" fill="#828384"/>
<path d="M390.6 356.5 L394.8 359.5 L390.1 376.5 L386.0 372.5Z" fill="#8e8f90"/>
<path d="M402.0 784.0 L408.5 788.6 L405.8 814.8 L399.3 808.7Z" fill="#8a8b8c"/>
<path d="M395.9 779.8 L399.2 783.0 L398.7 801.0 L395.4 796.8Z" fill="#8e8f90"/>
<path d="M391.7 702.7 L395.1 707.5 L388.5 734.5 L385.2 728.1Z" fill="#8e8f90"/>
<path d="M397.8 480.3 L402.1 486.4 L399.2 521.1 L394.8 513.0Z" fill="#868788"/>
<path d="M397.6 720.3 L403.7 725.8 L398.5 757.2 L392.4 749.8Z" fill="#868788"/>
<path d="M400.8 376.9 L405.8 381.3 L404.3 406.4 L399.3 400.5Z" fill="#828384"/>
<path d="M385.8 727.9 L388.8 730.1 L389.9 742.9 L387.0 739.9Z" fill="#868788"/>
<path d="M388.0 658.8 L392.1 662.7 L392.5 684.6 L388.5 679.4Z" fill="#828384"/>
<path d="M402.9 442.3 L405.7 445.4 L403.6 462.7 L400.8 458.6Z" fill="#8a8b8c"/>
<path d="M410.7 435.9 L416.8 438.9 L409.7 455.6 L403.6 451.7Z" fill="#8e8f90"/>
<path d="M395.0 499.5 L398.6 503.9 L399.7 528.4 L396.1 522.6Z" fill="#8a8b8c"/>
<path d="M398.4 475.6 L404.5 481.9 L402.5 517.1 L396.4 508.8Z" fill="#868788"/>
<path d="M406.1 586.1 L410.0 589.5 L403.5 608.8 L399.6 604.3Z" fill="#8a8b8c"/>
<path d="M389.2 533.9 L394.7 537.3 L395.6 556.8 L390.1 552.2Z" fill="#8a8b8c"/>
<path d="M392.8 519.7 L399.0 524.9 L392.8 554.4 L386.6 547.5Z" fill="#8e8f90"/>
<path d="M397.4 470.6 L402.7 476.5 L402.6 509.9 L397.4 502.0Z" fill="#828384"/>
<path d="M407.7 758.0 L410.3 762.8 L406.8 790.5 L404.2 784.0Z" fill="#8a8b8c"/>
<path d="M397.4 595.3 L400.3 600.1 L401.7 627.2 L398.8 620.8Z" fill="#828384"/>
<path d="M381.3 653.2 L386.1 657.1 L385.9 679.5 L381.0 674.2Z" fill="#8a8b8c"/>
<path d="M406.6 551.6 L411.1 555.0 L404.9 574.3 L400.4 569.7Z" fill="#8a8b8c"/>
<path d="M390.9 411.7 L395.8 417.6 L390.9 451.4 L385.9 443.5Z" fill="#8a8b8c"/>
<path d="M382.8 478.5 L385.8 483.1 L383.4 509.6 L380.3 503.4Z" fill="#8e8f90"/>
<path d="M373.3 620.1 L377.1 625.0 L372.0 652.7 L368.2 646.2Z" fill="#828384"/>
<path d="M403.3 689.8 L408.8 692.7 L403.4 709.4 L397.9 705.5Z" fill="#868788"/>
<path d="M392.6 582.8 L397.1 588.4 L397.0 620.2 L392.5 612.8Z" fill="#8a8b8c"/>
<path d="M400.4 760.8 L404.0 763.6 L400.9 779.5 L397.3 775.7Z" fill="#8e8f90"/>
<path d="M400.3 749.0 L404.8 753.9 L403.7 781.8 L399.1 775.2Z" fill="#828384"/>
<path d="M385.6 455.4 L391.4 458.6 L389.1 477.2 L383.3 472.8Z" fill="#8e8f90"/>
<path d="M387.9 576.7 L390.5 579.4 L387.6 594.5 L385.1 591.0Z" fill="#8a8b8c"/>
<path d="M413.2 673.1 L416.7 678.4 L416.4 708.9 L412.8 701.7Z" fill="#8a8b8c"/>
<path d="M384.0 516.5 L389.7 522.7 L388.1 557.4 L382.3 549.2Z" fill="#868788"/>
<path d="M383.3 699.6 L386.8 704.7 L386.2 733.6 L382.6 726.8Z" fill="#8a8b8c"/>
<path d="M393.6 386.9 L398.9 391.1 L396.7 415.4 L391.4 409.7Z" fill="#868788"/>
<path d="M405.0 490.9 L410.7 496.8 L404.3 530.2 L398.6 522.4Z" fill="#828384"/>
<path d="M380.2 363.0 L386.4 366.7 L383.7 387.6 L377.6 382.6Z" fill="#8e8f90"/>
<path d="M399.4 524.9 L404.5 527.9 L403.3 544.6 L398.2 540.7Z" fill="#8a8b8c"/>
<path d="M420.0 403.4 L426.4 407.8 L425.4 432.5 L419.0 426.7Z" fill="#8e8f90"/>
<path d="M376.9 427.0 L382.2 429.2 L379.2 441.5 L373.8 438.6Z" fill="#8a8b8c"/>
<path d="M377.1 513.8 L381.6 516.1 L381.2 528.6 L376.7 525.7Z" fill="#8a8b8c"/>
<path d="M389.2 508.0 L391.8 512.4 L390.8 537.0 L388.1 531.2Z" fill="#868788"/>
<path d="M418.6 528.2 L423.2 533.2 L419.8 561.2 L415.2 554.6Z" fill="#828384"/>
<path d="M395.0 580.8 L400.2 586.1 L396.7 616.0 L391.4 609.0Z" fill="#8e8f90"/>
<path d="M388.9 703.1 L393.5 709.0 L388.6 742.5 L384.0 734.6Z" fill="#828384"/>
<path d="M392.5 763.1 L398.5 767.7 L393.7 794.1 L387.8 787.9Z" fill="#868788"/>
<path d="M380.8 769.7 L384.1 774.0 L381.5 798.7 L378.2 792.9Z" fill="#828384"/>
<path d="M392.8 313.5 L399.2 317.7 L395.1 341.9 L388.8 336.2Z" fill="#8a8b8c"/>
<path d="M415.1 538.2 L418.6 543.4 L419.4 573.2 L415.9 566.2Z" fill="#666768"/>
<path d="M419.4 419.4 L423.2 421.9 L421.0 435.8 L417.2 432.6Z" fill="#636465"/>
<path d="M361.8 748.8 L364.4 751.4 L360.0 766.2 L357.4 762.7Z" fill="#666768"/>
<path d="M365.0 456.2 L368.7 460.2 L369.1 483.0 L365.3 477.7Z" fill="#606162"/>
<path d="M422.5 421.5 L425.0 425.7 L425.5 449.4 L422.9 443.9Z" fill="#606162"/>
<path d="M362.9 377.5 L366.7 382.4 L365.6 410.2 L361.8 403.7Z" fill="#636465"/>
<path d="M370.4 412.8 L373.7 416.0 L374.5 433.8 L371.2 429.6Z" fill="#636465"/>
<path d="M362.7 677.5 L365.6 679.9 L363.3 693.4 L360.5 690.2Z" fill="#666768"/>
<path d="M365.9 703.6 L368.9 707.8 L369.1 731.4 L366.1 725.9Z" fill="#636465"/>
<path d="M428.6 397.5 L431.4 401.2 L431.4 422.6 L428.6 417.6Z" fill="#606162"/>
<path d="M426.8 784.3 L429.6 786.5 L428.4 799.1 L425.6 796.2Z" fill="#606162"/>
<path d="M366.7 739.0 L369.7 743.8 L371.1 771.5 L368.1 765.0Z" fill="#606162"/>
<path d="M429.2 346.2 L431.9 348.6 L429.7 362.3 L427.0 359.1Z" fill="#666768"/>
<path d="M366.0 549.9 L370.1 552.1 L366.5 564.8 L362.4 561.8Z" fill="#666768"/>
<path d="M370.4 520.2 L374.4 522.6 L374.3 536.3 L370.3 533.0Z" fill="#666768"/>
<path d="M425.3 733.2 L429.2 735.9 L427.9 751.4 L424.0 747.8Z" fill="#666768"/>
<path d="M363.6 690.3 L368.2 693.8 L368.6 713.3 L364.1 708.7Z" fill="#606162"/>
<path d="M426.2 637.0 L429.3 639.7 L429.4 655.0 L426.4 651.4Z" fill="#666768"/>
<path d="M360.1 527.4 L363.2 532.6 L362.6 562.2 L359.5 555.2Z" fill="#666768"/>
<path d="M365.7 404.8 L369.2 410.2 L368.3 440.8 L364.8 433.6Z" fill="#606162"/>
<path d="M365.5 358.0 L369.6 362.5 L366.3 388.3 L362.3 382.2Z" fill="#666768"/>
<path d="M370.7 544.8 L373.4 547.7 L374.3 564.3 L371.5 560.4Z" fill="#606162"/>
</g>
<path d="M404.5 343.5 L420.6 325.6 L421.8 333 L405.6 345.5Z" fill="#fff"/>

<g fill="none" stroke="#5f7cc4" stroke-width="1.100">
<path d="M227 165 L1008 792" />
<path d="M548.700 165 L59.400 556.400"/>
<path d="M1018.200 165 V792" stroke="#97a3cf"/>
<rect x="1016" y="291.500" width="4.500" height="4.500" fill="#fff" stroke="#6a7fc0"/>
</g>
    </svg>
  </div>

  <div id="itp" style="position:absolute;left:665px;top:156px;width:213px;height:305px;background:#535353;box-shadow:0 0 3px rgba(0,0,0,.45);border-radius:2px 2px 0 0;font-size:9px;color:#d6d6d6;letter-spacing:-0.300px">
    <div class="abs" style="left:0;top:0;width:213px;height:10px;background:#434343;border-radius:2px 2px 0 0"></div>
    <svg class="abs" style="left:188px;top:3px" width="7" height="5" viewBox="0 0 7 5"><path d="M2.700 0.500 L0.500 2.500 L2.700 4.500Z M6 0.500 L3.800 2.500 L6 4.500Z" fill="#bdbdbd"/></svg>
    <svg class="abs" style="left:202px;top:2px" width="7" height="7" viewBox="0 0 7 7"><path d="M0.800 0.800L6.200 6.200M6.200 0.800L0.800 6.200" stroke="#e4e4e4" stroke-width="1.200"/></svg>
    <div class="abs" style="left:0;top:10px;width:213px;height:23px;background:#434343"></div>
    <div class="abs" style="left:0;top:10px;width:63px;height:23px;background:#535353;border-radius:2px 2px 0 0"></div>
    <div class="abs" style="left:8px;top:16px;font-size:8.500px;font-weight:bold;color:#f0f0f0;letter-spacing:-0.200px;white-space:nowrap">Image Trace</div>
    <!-- preset icons -->
    <svg class="abs" style="left:36px;top:40px" width="142" height="20" viewBox="0 0 142 20" fill="none" stroke="#d0d0d0" stroke-width="1">
      <g><path d="M6 8c1-4 5-6 9-4l-1.500 2.500c-2-1-4.500 0-5 2.500z M10 10c.500-2 2.500-3 4.500-2l-1.200 2.300c-.800-.400-1.600 0-1.800.800z" fill="#c8c8c8" stroke="none"/><path d="M15 4c2 1 3 3.500 2.500 6l-2.800-.500c.300-1.300-.200-2.500-1.200-3z" fill="#9a9a9a" stroke="none"/><circle cx="6.500" cy="13" r="2.800" stroke-width="1.100"/><circle cx="6.500" cy="13" r="1" fill="#d0d0d0" stroke="none"/></g>
      <g transform="translate(24 0)"><path d="M4 7h3l1.200-2h5.600L15 7h3v8H4z" fill="#d0d0d0" stroke="none"/><circle cx="11" cy="10.800" r="2.600" fill="#535353" stroke="none"/><circle cx="11" cy="10.800" r="1.300" fill="#d0d0d0" stroke="none"/></g>
      <g transform="translate(48 0)"><rect x="4.500" y="4.500" width="12" height="12" stroke-width="1.100"/><path d="M10.500 4.500v12M4.500 10.500h12M4.500 7.500h6M7.500 4.500v6"/><rect x="10.500" y="4.500" width="6" height="6" fill="#777" stroke="none" opacity=".6"/></g>
      <g transform="translate(72 0)"><rect x="4.500" y="4.500" width="12" height="12" fill="url(#itg)" stroke-width="1.100"/></g>
      <g transform="translate(96 0)"><rect x="4.500" y="4.500" width="12" height="12" stroke-width="1.100"/><rect x="5" y="5" width="5.500" height="11" fill="#d0d0d0" stroke="none"/></g>
      <g transform="translate(120 0)"><path d="M4.500 4.500h8c3 0 5 2 5 5 0 2-1 3-2.500 3.500 0 2-1.500 3.500-3.500 3.500s-3-1-3.500-3l-3.500-4z" stroke-width="1.200"/></g>
      <defs><linearGradient id="itg" x1="0" x2="1"><stop offset="0" stop-color="#333"/><stop offset="1" stop-color="#e8e8e8"/></linearGradient></defs>
    </svg>
    <div class="sep" style="left:8px;top:65px;width:197px;background:#4a4a4a"></div>
    <!-- Preset -->
    <div class="abs" style="left:0;top:75px;width:44px;text-align:right;color:#cfcfcf">Preset:</div>
    <div class="dd" style="left:48px;top:73px;width:135px;height:15px;font-size:9px;letter-spacing:-0.300px"><span style="top:1px;left:3px">Custom</span><svg class="chev" style="left:122px;top:4px" viewBox="0 0 8 5"><path d="M0.800 0.800L4 4 7.200 0.800" fill="none" stroke="#f0f0f0" stroke-width="1.400"/></svg></div>
    <svg class="abs" style="left:193px;top:76px" width="11" height="9" viewBox="0 0 11 9"><path d="M3 1.500h8M3 4.500h8M3 7.500h8" stroke="#8e8e8e" stroke-width="1.200"/><path d="M0 1.500h1.600M0 4.500h1.600M0 7.500h1.600" stroke="#8e8e8e" stroke-width="1.200"/></svg>
    <!-- View -->
    <div class="abs" style="left:0;top:99px;width:44px;text-align:right;color:#cfcfcf">View:</div>
    <div class="dd" style="left:48px;top:97px;width:135px;height:15px;font-size:9px;letter-spacing:-0.300px"><span style="top:1px;left:3px">Tracing Result</span><svg class="chev" style="left:122px;top:4px" viewBox="0 0 8 5"><path d="M0.800 0.800L4 4 7.200 0.800" fill="none" stroke="#f0f0f0" stroke-width="1.400"/></svg></div>
    <svg class="abs" style="left:192px;top:100px" width="12" height="9" viewBox="0 0 12 9"><path d="M0.500 4.500C2 1.500 4 .700 6 .700s4 .800 5.500 3.800C10 7.500 8 8.300 6 8.300S2 7.500.500 4.500z" fill="#e0e0e0"/><circle cx="6" cy="4.500" r="2.300" fill="#535353"/><circle cx="6" cy="4.500" r="1.100" fill="#e0e0e0"/></svg>
    <!-- Mode -->
    <div class="abs" style="left:0;top:122px;width:44px;text-align:right;color:#cfcfcf">Mode:</div>
    <div class="dd" style="left:48px;top:120px;width:135px;height:15px;font-size:9px;letter-spacing:-0.300px;background:#2e2e2e;border-color:#2e2e2e"><span style="top:1px;left:3px">Grayscale</span><svg class="chev" style="left:122px;top:4px" viewBox="0 0 8 5"><path d="M0.800 0.800L4 4 7.200 0.800" fill="none" stroke="#f0f0f0" stroke-width="1.400"/></svg></div>
    <div class="abs" style="left:0;top:144px;width:44px;text-align:right;color:#6c6c6c">Palette:</div>
    <div class="abs" style="left:0;top:165px;width:44px;text-align:right;color:#cfcfcf">Grays:</div>
    <div class="abs" style="left:183px;top:163px;width:25px;height:14px;background:#3f3f3f;color:#ddd;font-size:9px"><span style="position:absolute;left:1px;top:1px">0</span></div>
    <div class="abs" style="left:200px;top:191px;width:12px;height:1px;background:#606060"></div>
    <!-- dropdown list -->
    <div class="abs" style="left:48px;top:137px;width:136px;height:55px;background:#494949;box-shadow:1px 1px 2px rgba(0,0,0,.5);font-size:10.500px;color:#f2f2f2;letter-spacing:-0.300px">
      <div class="abs" style="left:0;top:36px;width:136px;height:19px;background:#5f5f5f"></div>
      <div class="abs" style="left:17px;top:3px">Color</div>
      <svg class="abs" style="left:4px;top:23px" width="9" height="8" viewBox="0 0 9 8"><path d="M1 4.200L3.500 6.800 8 1" fill="none" stroke="#f0f0f0" stroke-width="1.400"/></svg>
      <div class="abs" style="left:17px;top:21.500px;color:#4f95e0">Grayscale</div>
      <div class="abs" style="left:17px;top:39.500px;white-space:nowrap">Black and White</div>
    </div>
    <!-- cursor -->
    <svg class="abs" style="left:131px;top:183px" width="9" height="14" viewBox="0 0 9 14"><path d="M1 1v10l2.300-2.200 1.800 4 1.500-.700-1.800-3.900H8z" fill="#fff" stroke="#222" stroke-width="0.800"/></svg>
    <!-- Advanced -->
    <svg class="abs" style="left:11px;top:197px" width="6" height="10" viewBox="0 0 6 10"><path d="M0.500 0.500L5.500 5 0.500 9.500z" fill="#c8c8c8"/></svg>
    <div class="abs" style="left:22px;top:197px;color:#cfcfcf">Advanced</div>
    <div class="sep" style="left:8px;top:213px;width:197px;background:#4a4a4a"></div>
    <!-- info -->
    <svg class="abs" style="left:5px;top:230px" width="13" height="13" viewBox="0 0 13 13"><circle cx="6.500" cy="6.500" r="5.500" fill="none" stroke="#e0e0e0" stroke-width="1"/><path d="M6.500 5.500v4" stroke="#e0e0e0" stroke-width="1.300"/><circle cx="6.500" cy="3.700" r=".800" fill="#e0e0e0"/></svg>
    <div class="abs" style="left:26px;top:222px">Paths:</div><div class="abs" style="left:62px;top:222px">418</div>
    <div class="abs" style="left:124px;top:222px">Colors:</div><div class="abs" style="left:154px;top:222px">122</div>
    <div class="abs" style="left:26px;top:240px">Anchors:</div><div class="abs" style="left:62px;top:240px">4502</div>
    <div class="sep" style="left:8px;top:256px;width:197px;background:#4a4a4a"></div>
    <!-- preview -->
    <div class="abs" style="left:4px;top:264px;width:11px;height:11px;background:#d9d9d9;border-radius:1px"></div>
    <svg class="abs" style="left:5px;top:265px" width="9" height="9" viewBox="0 0 9 9"><path d="M1.300 4.500L3.600 7 7.800 1.500" fill="none" stroke="#333" stroke-width="1.500"/></svg>
    <div class="abs" style="left:20px;top:265px;color:#f2f2f2;font-weight:bold;font-size:8.500px;letter-spacing:-0.200px">Preview</div>
    <div class="abs" style="left:155px;top:263px;width:52px;height:14px;background:#585858;border-radius:2px;color:#6c6c6c;text-align:center;line-height:14px">Trace</div>
    <div class="sep" style="left:8px;top:283px;width:197px;background:#4a4a4a"></div>
    <div class="abs" style="left:4px;top:289px;color:#bdbdbd;white-space:nowrap">Help us improve Image Trace.</div>
    <div class="abs" style="left:121px;top:288.500px;color:#f4f4f4;white-space:nowrap;border-bottom:1px dotted #ddd;line-height:11px;font-weight:bold;font-size:8.500px;letter-spacing:-0.350px">Share feedback.</div>
  </div>
  <div id="vscroll">
    <svg class="abs" style="left:3px;top:4px" width="9" height="6" viewBox="0 0 9 6"><path d="M1 5L4.500 1.500 8 5" fill="none" stroke="#bdbdbd" stroke-width="1.300"/></svg>
    <div class="abs" style="left:2px;top:304px;width:10px;height:21px;border-radius:5px;background:#6a6a6a"></div>
    <svg class="abs" style="left:3px;top:617px" width="9" height="6" viewBox="0 0 9 6"><path d="M1 1L4.500 4.500 8 1" fill="none" stroke="#bdbdbd" stroke-width="1.300"/></svg>
  </div>
  <div id="status">

    <div class="abs" style="left:0;top:0;width:44px;height:14px;background:#474747"></div>
    <div class="abs" style="left:60px;top:0;width:44px;height:14px;background:#474747"></div>
    <div class="abs" style="left:152px;top:0;width:36px;height:14px;background:#474747"></div>
    <div class="abs" style="left:245px;top:0;width:165px;height:14px;background:#505050"></div>
    <svg class="abs" style="left:0;top:0" width="1084" height="14" viewBox="62 790.500 1084 14" fill="none" stroke="#dcdcdc" stroke-width="1.300">
      <path d="M110 797.500l3 3 3-3M171 797.500l3 3 3-3M254 797.500l3 3 3-3"/>
      <g fill="#777" stroke="none"><path d="M190 796h1.500v7H190zM196 796v7l-4.200-3.500zM210 796v7l-4.200-3.500zM272 796v7l4.200-3.500zM286 796v7l4.200-3.500zM290.500 796h1.500v7h-1.500z"/></g>
      <path d="M473 795.500v7l4.500-3.500z" fill="#e4e4e4" stroke="none"/>
      <path d="M491 796l-2.500 3 2.500 3" stroke="#9a9a9a" stroke-width="1.100"/>
      <path d="M1122 796l3 3.200-3 3.200" stroke="#bdbdbd" stroke-width="1.200"/>
    </svg>
    <div class="abs" style="left:730px;top:2px;width:21px;height:10px;border-radius:5px;background:#636363"></div>
    <div class="t" style="left:6px">227.47%</div>
    <div class="t" style="left:66px">0°</div>
    <div class="t" style="left:158px">1</div>
    <div class="t" style="left:305px">Selection</div>
  </div>
  <div id="rpanel">
    <div class="abs" style="left:0;top:0;width:134px;height:9px;background:#424242"></div>
    <svg class="abs" style="left:88px;top:2px" width="8" height="5" viewBox="0 0 8 5"><path d="M3 0.500 L0.800 2.500 L3 4.500Z M6.500 0.500 L4.300 2.500 L6.500 4.500Z" fill="#bdbdbd"/></svg>
    <svg class="abs" style="left:122px;top:2px" width="8" height="5" viewBox="0 0 8 5"><path d="M3 0.500 L0.800 2.500 L3 4.500Z M6.500 0.500 L4.300 2.500 L6.500 4.500Z" fill="#bdbdbd"/></svg>
    <div class="abs" style="left:100px;top:9px;width:2px;height:656px;background:#484848"></div>
    <svg width="0" height="0" style="position:absolute"><defs><linearGradient id="rg1" x1="0" x2="1"><stop offset="0" stop-color="#333"/><stop offset="1" stop-color="#eee"/></linearGradient><linearGradient id="rg2" x1="0" x2="1"><stop offset="0" stop-color="#333"/><stop offset="1" stop-color="#ddd"/></linearGradient></defs></svg>
    <div class="grip" style="left:43px;top:13.6px;width:14px"></div>
    <div class="grip" style="left:43px;top:71.0px;width:14px"></div>
    <div class="grip" style="left:43px;top:151.8px;width:14px"></div>
    <div class="grip" style="left:43px;top:232.8px;width:14px"></div>
    <div class="grip" style="left:43px;top:290.0px;width:14px"></div>
    <div class="grip" style="left:43px;top:371.0px;width:14px"></div>
    <div class="sep" style="left:0;top:67.5px;width:100px"></div>
    <div class="sep" style="left:0;top:147.5px;width:100px"></div>
    <div class="sep" style="left:0;top:228.5px;width:100px"></div>
    <div class="sep" style="left:0;top:286.0px;width:100px"></div>
    <div class="sep" style="left:0;top:367.0px;width:100px"></div>
    <div class="sep" style="left:0;top:447.8px;width:100px"></div>
    <svg class="abs" style="left:8px;top:21.5px" width="17" height="17" viewBox="0 0 16 16"><path d="M8 2.500c-4 0-7 2.500-7 5.500s3 4.500 5 4c1.500-.400 1-2 2.500-2.300 1.500-.300 2.500 1.800 4.500.800 2-1 2.500-3 1.500-5s-3.500-3-6.500-3z" fill="#d4d4d4"/><circle cx="4.500" cy="7" r="1.200" fill="#535353"/><circle cx="7" cy="4.800" r="1.200" fill="#535353"/><circle cx="10.500" cy="5" r="1.200" fill="#535353"/><circle cx="12.500" cy="7.500" r="1.200" fill="#535353"/></svg><div class="pi" style="top:24.0px">Color</div>
    <svg class="abs" style="left:8px;top:45.0px" width="17" height="17" viewBox="0 0 16 16"><path d="M2 2v12h12C14 8 9 2 2 2z" fill="url(#rg1)" stroke="#d4d4d4" stroke-width="1"/></svg><div class="pi" style="top:47.5px">Color Guide</div>
    <svg class="abs" style="left:8px;top:78.5px" width="17" height="17" viewBox="0 0 16 16"><rect x="1" y="3" width="14" height="10" fill="#888"/><path d="M1 6.300h14M1 9.700h14M5.700 3v10M10.300 3v10" stroke="#ccc" stroke-width="0.800"/><rect x="1" y="3" width="4.700" height="3.300" fill="#ddd"/><rect x="10.300" y="9.700" width="4.700" height="3.300" fill="#bbb"/></svg><div class="pi" style="top:81.0px">Swatches</div>
    <svg class="abs" style="left:8px;top:101.9px" width="17" height="17" viewBox="0 0 16 16"><path d="M4.500 9h7v5.500h-7z" fill="#d4d4d4"/><path d="M6 9L3.500 3M8 9V1.500M10 9l2.500-5.500" stroke="#d4d4d4" stroke-width="1.300"/><path d="M2.500 1.500l2 1-1 2.500zM7 0h2v3h-2zM12 2l2 1-1.500 2.500z" fill="#d4d4d4"/></svg><div class="pi" style="top:104.4px">Brushes</div>
    <svg class="abs" style="left:8px;top:125.3px" width="17" height="17" viewBox="0 0 16 16"><circle cx="8" cy="4.500" r="3.200" fill="#d4d4d4"/><circle cx="4.500" cy="9" r="3.200" fill="#d4d4d4"/><circle cx="11.500" cy="9" r="3.200" fill="#d4d4d4"/><path d="M7.300 8h1.400l1.300 7h-4z" fill="#d4d4d4"/></svg><div class="pi" style="top:127.8px">Symbols</div>
    <svg class="abs" style="left:8px;top:160.2px" width="17" height="17" viewBox="0 0 16 16"><path d="M1 3.500h14" stroke="#d4d4d4" stroke-width="1"/><path d="M1 8h14" stroke="#d4d4d4" stroke-width="2"/><path d="M1 13h14" stroke="#d4d4d4" stroke-width="3"/></svg><div class="pi" style="top:162.7px">Stroke</div>
    <svg class="abs" style="left:8px;top:183.3px" width="17" height="17" viewBox="0 0 16 16"><rect x="1.500" y="3.500" width="13" height="9" fill="url(#rg2)" stroke="#d4d4d4" stroke-width="1"/></svg><div class="pi" style="top:185.8px">Gradient</div>
    <svg class="abs" style="left:8px;top:206.5px" width="17" height="17" viewBox="0 0 16 16"><circle cx="6" cy="6" r="5" fill="#aaa" stroke="#c8c8c8" stroke-width="0.800"/><circle cx="10" cy="10" r="5" fill="#8c8c8c" fill-opacity="0.850" stroke="#bbb" stroke-width="0.800"/></svg><div class="pi" style="top:209.0px">Transparency</div>
    <svg class="abs" style="left:8px;top:240.5px" width="17" height="17" viewBox="0 0 16 16"><circle cx="8" cy="8" r="5" fill="#d4d4d4"/><circle cx="8" cy="8" r="7" fill="none" stroke="#d4d4d4" stroke-width="1" stroke-dasharray="1.200 1.500"/></svg><div class="pi" style="top:243.0px">Appearance</div>
    <svg class="abs" style="left:8px;top:264.0px" width="17" height="17" viewBox="0 0 16 16"><rect x="4.500" y="1.500" width="10" height="10" fill="none" stroke="#d4d4d4" stroke-width="1.100"/><rect x="1.500" y="8.500" width="6" height="6" fill="#535353" stroke="#d4d4d4" stroke-width="1.100"/><circle cx="4.500" cy="11.500" r="1.500" fill="#d4d4d4"/></svg><div class="pi" style="top:266.5px">Graphic Styl...</div>
    <svg class="abs" style="left:8px;top:298.5px" width="17" height="17" viewBox="0 0 16 16"><path d="M8 1.500L15 5.500 8 9.500 1 5.500z" fill="#d4d4d4"/><path d="M2 9.500L8 13l6-3.500" fill="none" stroke="#d4d4d4" stroke-width="1.600"/></svg><div class="pi" style="top:301.0px">Layers</div>
    <svg class="abs" style="left:8px;top:321.5px" width="17" height="17" viewBox="0 0 16 16"><path d="M7 3.500H1.500V14.500H12.500V9" fill="none" stroke="#d4d4d4" stroke-width="1.200"/><path d="M7 9L14.500 1.500M9.500 1.500h5v5" fill="none" stroke="#d4d4d4" stroke-width="1.300"/></svg><div class="pi" style="top:324.0px">Asset Export</div>
    <svg class="abs" style="left:8px;top:344.8px" width="17" height="17" viewBox="0 0 16 16"><rect x="1" y="1.500" width="9" height="8" fill="none" stroke="#d4d4d4" stroke-width="1.100"/><rect x="5" y="6.500" width="10" height="8" fill="#535353" stroke="#d4d4d4" stroke-width="1.100"/></svg><div class="pi" style="top:347.3px">Artboards</div>
    <svg class="abs" style="left:8px;top:378.5px" width="17" height="17" viewBox="0 0 16 16"><rect x="3.500" y="3.500" width="9" height="9" fill="none" stroke="#d4d4d4" stroke-width="1" stroke-dasharray="1.500 1.500"/><path d="M2 2h3v3H2zM11 2h3v3h-3zM2 11h3v3H2zM11 11h3v3h-3z" fill="#d4d4d4"/><circle cx="8" cy="8" r="0.900" fill="#d4d4d4"/></svg><div class="pi" style="top:381.0px">Transform</div>
    <svg class="abs" style="left:8px;top:402.0px" width="17" height="17" viewBox="0 0 16 16"><path d="M2 1v14" stroke="#d4d4d4" stroke-width="1.200"/><rect x="4" y="3" width="6" height="4" fill="#d4d4d4"/><rect x="4" y="9" width="10" height="4" fill="#d4d4d4"/></svg><div class="pi" style="top:404.5px">Align</div>
    <svg class="abs" style="left:8px;top:425.3px" width="17" height="17" viewBox="0 0 16 16"><rect x="2" y="2" width="7" height="7" fill="#d4d4d4"/><rect x="7" y="7" width="7.500" height="7.500" fill="#d4d4d4"/><rect x="7" y="7" width="2" height="2" fill="#535353"/><path d="M5.500 5.500h5v5h-5z" fill="none" stroke="#535353" stroke-width="0.800"/></svg><div class="pi" style="top:427.8px">Pathfinder</div>
    <div class="grip" style="left:112px;top:13.600px;width:10px"></div>
    <svg class="abs" style="left:110px;top:21px" width="16" height="17" viewBox="0 0 16 17" fill="none" stroke="#cfcfcf" stroke-width="1"><path d="M1 3.500h14M1 8.500h14M1 13.500h14"/><circle cx="10.500" cy="3.500" r="1.800" fill="#535353"/><circle cx="5" cy="8.500" r="1.800" fill="#535353"/><circle cx="9" cy="13.500" r="1.800" fill="#535353"/></svg>
    <svg class="abs" style="left:110px;top:44px" width="16" height="17" viewBox="0 0 16 17" fill="none" stroke="#cfcfcf" stroke-width="1.100"><path d="M3.500 1.500h11v12h-11zM1.500 3.500v12h11"/><path d="M8 1.500v5l2-1.500 2 1.500v-5z" fill="#cfcfcf" stroke="none"/></svg>
    <div class="sep" style="left:102px;top:66.700px;width:32px"></div>
  </div>
</div>
</body>
</html>
